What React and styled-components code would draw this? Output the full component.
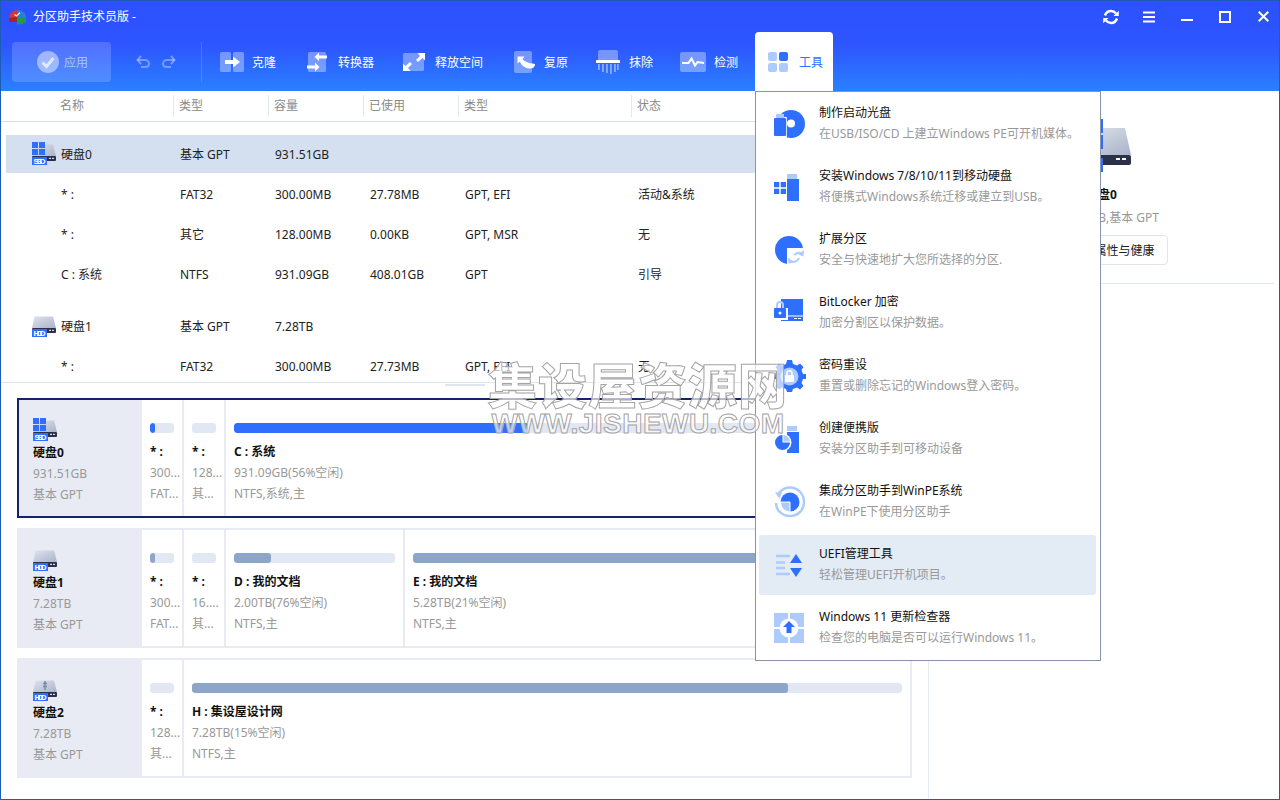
import React from 'react';
import styled, { createGlobalStyle } from 'styled-components';

const FONT = '"Noto Sans", "Noto Sans CJK SC", sans-serif';
const BLUE = '#2f6fff';
const LIGHT = '#aecbff';

const Global = createGlobalStyle`
  html, body { margin: 0; padding: 0; background: #fff; }
  body { font-family: ${FONT}; font-size: 12px; color: #222; overflow: hidden; }
  * { box-sizing: border-box; }
`;

const Window = styled.div`
  position: relative; width: 1280px; height: 800px; border: 1px solid #1c5cb8;
  display: flex; flex-direction: column; overflow: hidden; background: #fff;
`;
const Header = styled.header`
  height: 90px; flex: none; display: flex; flex-direction: column;
  background: linear-gradient(180deg, #2c50ff 0%, #2e56ff 50%, #2a80ff 100%);
`;
const TitleBar = styled.div`
  height: 31px; flex: none; display: flex; align-items: center; padding: 0 0 0 7px; color: #fff;
`;
const TitleText = styled.span`margin-left: 6px; line-height: 30px;`;
const WinControls = styled.div`
  margin-left: auto; display: flex; align-items: center; gap: 14px; padding-right: 4px; height: 31px;
`;
const WinBtn = styled.span`width: 24px; display: flex; justify-content: center;`;
const Toolbar = styled.div`
  height: 59px; flex: none; display: flex; align-items: center; padding-left: 11px;
`;
const ApplyBtn = styled.div`
  width: 99px; height: 40px; border-radius: 4px; background: rgba(255,255,255,.17);
  display: flex; align-items: center; padding-left: 25px; gap: 5px; color: rgba(255,255,255,.55);
`;
const UndoGroup = styled.div`
  display: flex; gap: 12px; margin-left: 25px; width: 65px;
`;
const Sep = styled.div`width: 1px; height: 40px; background: rgba(255,255,255,.16); margin-right: 18px;`;
const Tool = styled.div`
  width: ${p => p.$w}px; display: flex; align-items: center; gap: 8px; color: #fff; flex: none;
`;
const ToolsTab = styled.div`
  align-self: stretch; width: 78px; flex: none; background: #fff; border-radius: 4px 4px 0 0;
  display: flex; align-items: center; gap: 11px; padding-left: 13px; color: ${BLUE};
`;

const Body = styled.main`flex: 1; display: flex; min-height: 0;`;
const LeftPane = styled.section`
  width: 928px; flex: none; border-right: 1px solid #e6eaf2; display: flex; flex-direction: column;
`;
const TableArea = styled.div`
  height: 292px; flex: none; overflow: hidden; border-bottom: 1px solid #dfe5ef;
`;
const TableHead = styled.div`
  height: 31px; border-bottom: 1px solid #d8dfe8; display: grid; align-items: center;
  grid-template-columns: 172px 95px 95px 95px 173px 1fr; color: #8a8a8a;
`;
const HeadCell = styled.div`
  height: 22px; line-height: 22px; padding-left: ${p => p.$first ? 59 : 5}px;
  border-left: ${p => p.$first ? 'none' : '1px solid #e3e7ef'};
`;
const Rows = styled.div`padding: 13px 6px 0 5px;`;
const Row = styled.div`
  display: grid; grid-template-columns: 174px 95px 95px 95px 173px 1fr; align-items: center;
  height: ${p => p.$disk ? 38 : 40}px; background: ${p => p.$sel ? '#d4dfef' : 'transparent'};
  margin-top: ${p => p.$gap ? 13 : 0}px; margin-bottom: ${p => p.$disk ? 1 : 0}px; color: #222;
`;
const NameCell = styled.div`
  display: flex; align-items: center; gap: 5px; padding-left: ${p => p.$disk ? 26 : 55}px;
`;

const Splitter = styled.div`height: 15px; flex: none; display: flex; justify-content: center; padding-top: 1px;`;
const Thumb = styled.div`width: 40px; height: 2px; background: #dfe6f2;`;
const Cards = styled.div`display: flex; flex-direction: column; gap: 10px; padding-left: 16px;`;
const Card = styled.div`
  width: 895px; height: 120px; display: flex; gap: 2px; background: #e8ebf3;
  border: 2px solid ${p => p.$sel ? '#14246a' : '#e8ebf3'};
`;
const DiskPanel = styled.div`
  width: 121px; flex: none; padding: 18px 0 0 14px; background: #e8ebf3;
  display: flex; flex-direction: column;
`;
const DiskName = styled.div`font-weight: 700; color: #111; line-height: 21px;`;
const Gray = styled.div`color: #999; line-height: 21px; white-space: nowrap;`;
const Part = styled.div`
  background: #fff; padding: 23px 8px 0; overflow: hidden; white-space: nowrap;
  ${p => p.$w ? `width: ${p.$w}px; flex: none;` : 'flex: 1; min-width: 0;'}
`;
const Bar = styled.div`
  height: 10px; border-radius: 3px; background: #e2e8f3; overflow: hidden; margin-bottom: 8px;
`;
const Fill = styled.div`
  height: 100%; border-radius: 3px; background: ${p => p.$sel ? BLUE : '#8da5c6'};
`;
const PartName = styled.div`font-weight: 700; color: #111; line-height: 21px;`;

const RightPane = styled.aside`
  flex: 1; padding: 28px 5px 0 0; display: flex; flex-direction: column; align-items: center;
`;
const BigName = styled.div`font-weight: 700; color: #111; line-height: 20px; margin-top: 13px;`;
const BigInfo = styled.div`color: #999; line-height: 20px; margin: 3px 0 0 8px;`;
const PropBtn = styled.div`
  width: 130px; height: 30px; margin: 7px 0 0 2px; border: 1px solid #e0e4ee; border-radius: 4px;
  display: flex; align-items: center; justify-content: flex-end; padding-right: 12px; color: #222;
`;
const Divider = styled.div`align-self: stretch; height: 1px; background: #e3e7f2; margin-top: 18px;`;

const Menu = styled.nav`
  position: absolute; left: 754px; top: 90px; width: 346px; height: 570px; background: #fff;
  border: 1px solid #8793ad; padding: 2px 4px 0 3px; display: flex; flex-direction: column; gap: 3px;
`;
const MenuItem = styled.div`
  height: 60px; flex: none; display: flex; align-items: center; padding-left: 15px; gap: 13px; border-radius: 3px;
  background: ${p => p.$hover ? '#e3ebf5' : 'transparent'};
`;
const IconBox = styled.div`width: 32px; height: 32px; flex: none;`;
const MenuText = styled.div`display: flex; flex-direction: column; margin-top: -1px;`;
const MenuTitle = styled.div`color: #111; line-height: 20px;`;
const MenuDesc = styled.div`color: #999; line-height: 20px; margin-top: 1px; white-space: nowrap;`;

const Mark = styled.div`
  position: absolute; left: 487px; top: 354px; width: 300px; pointer-events: none; text-align: center;
  color: rgba(255,255,255,.68); -webkit-text-stroke: 1px #a4a4a4;
`;
const MarkCn = styled.div`font: 900 49px/55px "Noto Sans CJK SC", sans-serif; letter-spacing: 1px; white-space: nowrap;`;
const MarkEn = styled.div`font: 700 28px/29px "Liberation Sans", sans-serif; letter-spacing: .45px; white-space: nowrap; margin-top: -1px;`;

/* ---------- drawings ---------- */
const Svg = ({ w, h = w, children }) => (
  <svg width={w} height={h} viewBox={`0 0 ${w} ${h}`} style={{ display: 'block', flex: 'none' }}>{children}</svg>
);

const Logo = () => (
  <Svg w={19} h={16}>
    <path d="M1 9C1 4 5 1 9.500 1 10 5 9.500 7 9.500 8.500L1 12Z" fill="#d8323a" />
    <path d="M9.500 1C14 1 18 4 18 8L9.500 8Z" fill="#2a7fd8" />
    <path d="M9 8H18V12C18 14 14 15.500 9 15.500Z" fill="#1f9a55" />
    <path d="M1 9L9 8V12.500L1 13Z" fill="#a32530" />
    <path d="M6.500 5.500L8.500 7 12 3.800" stroke="#d8ffe0" strokeWidth="1.200" fill="none" />
  </Svg>
);
const Check = () => (
  <Svg w={22}>
    <circle cx="11" cy="11" r="11" fill="rgba(255,255,255,.45)" />
    <path d="M5.500 11.500L9.500 15.500 16.500 7" stroke="#dfe8ff" strokeWidth="3" fill="none" />
  </Svg>
);
const Undo = ({ flip }) => (
  <Svg w={14} h={14}>
    <g transform={flip ? 'translate(14 0) scale(-1 1)' : undefined} fill="none" stroke="rgba(255,255,255,.35)" strokeWidth="2">
      <path d="M1.500 5H9C11.500 5 13 7 13 8.500 13 10.500 11.500 12 9 12H5" />
      <path d="M5 1L1.500 5 5 9" />
    </g>
  </Svg>
);
const Clone = () => (
  <Svg w={24} h={20}>
    <rect x="0" y="0" width="11" height="20" rx="1.500" fill="rgba(255,255,255,.35)" />
    <rect x="13" y="0" width="11" height="20" rx="1.500" fill="rgba(255,255,255,.35)" />
    <path d="M5 8H13V4.500L20 10 13 15.500V12H5Z" fill="#fff" />
  </Svg>
);
const Convert = () => (
  <Svg w={23} h={22}>
    <rect x="1" y="1" width="18" height="20" rx="1.500" fill="rgba(255,255,255,.35)" />
    <path d="M20 4.500H12V1.500L7.500 6 12 10V7.500H20Z" fill="#fff" />
    <path d="M0 14.500H8V11.500L12.500 16 8 20.500V17.500H0Z" fill="#fff" />
  </Svg>
);
const Free = () => (
  <Svg w={24} h={20}>
    <rect x="0" y="1" width="21" height="18" rx="1.500" fill="rgba(255,255,255,.35)" />
    <path d="M22 1V8.500L19.500 6 15 10 13 8 17 4 14.500 1Z" fill="#fff" />
    <path d="M0 19V11.500L2.500 14 7 10 9 12 5 16 7.500 19Z" fill="#fff" />
  </Svg>
);
const Restore = () => (
  <Svg w={22} h={22}>
    <rect x="0" y="0" width="18" height="22" rx="2" fill="rgba(255,255,255,.35)" />
    <path d="M3.500 5.500H10.500L8.500 8C10.500 10.500 14 12 21 13 21 16.500 18 18 15 17.500 11 17 7 14.500 6 10.500L3.500 12.500Z" fill="#fff" />
  </Svg>
);
const Wipe = () => (
  <Svg w={25} h={24}>
    <path d="M2 2C2 .9 3 0 4 0H20C21 0 22 .9 22 2V10H2Z" fill="rgba(255,255,255,.35)" />
    <rect x="0" y="10" width="24" height="3" rx=".5" fill="#fff" />
    {[2, 6, 10, 14, 18, 21].map((x, i) => (
      <rect key={x} x={x} y="14" width="1.800" height={[6, 8, 9, 10, 8, 6][i]} fill="rgba(255,255,255,.45)" />
    ))}
  </Svg>
);
const Pulse = () => (
  <Svg w={26} h={20}>
    <rect width="26" height="20" rx="2" fill="rgba(255,255,255,.35)" />
    <path d="M2 11H8.500L11.500 6.500 15 13.500 17.500 10 24 11" fill="none" stroke="#fff" strokeWidth="2" />
  </Svg>
);
const Tiles = () => (
  <Svg w={20}>
    <rect x="0" y="0" width="9" height="9" rx="2" fill={LIGHT} />
    <rect x="11" y="0" width="9" height="9" rx="2" fill={BLUE} />
    <rect x="0" y="11" width="9" height="9" rx="2" fill={LIGHT} />
    <rect x="11" y="11" width="9" height="9" rx="2" fill={LIGHT} />
  </Svg>
);
const Stroke = { fill: 'none', stroke: '#fff', strokeWidth: 2 };
const Refresh = () => (
  <Svg w={16}>
    <path d="M2 6.500C3 3.500 5.500 2 8 2 10.500 2 12 3.200 13 4.500" {...Stroke} strokeWidth="2.400" />
    <path d="M14 9.500C13 12.500 10.500 14 8 14 5.500 14 4 12.800 3 11.500" {...Stroke} strokeWidth="2.400" />
    <path d="M15.800 1.800V7H10.500Z M.2 14.200V9H5.500Z" fill="#fff" />
  </Svg>
);
const Burger = () => (
  <Svg w={12} h={12}>
    <path d="M0 1.500H12M0 6H12M0 10.500H12" {...Stroke} strokeWidth="1.800" />
  </Svg>
);
const Minus = () => <Svg w={12} h={12}><path d="M0 9H12" {...Stroke} /></Svg>;
const Maximize = () => <Svg w={12} h={12}><rect x="1" y="1" width="10" height="10" {...Stroke} /></Svg>;
const Close = () => <Svg w={11} h={11}><path d="M.7 .7L10.300 10.300M10.300 .7L.7 10.300" {...Stroke} /></Svg>;

const WinLogo = ({ x, y, s, fill = BLUE, gap = 1 }) => {
  const c = (s - gap) / 2;
  return (
    <g fill={fill}>
      <rect x={x} y={y} width={c} height={c} />
      <rect x={x + c + gap} y={y} width={c} height={c} />
      <rect x={x} y={y + c + gap} width={c} height={c} />
      <rect x={x + c + gap} y={y + c + gap} width={c} height={c} />
    </g>
  );
};
const DiskIcon = ({ kind = 'HDD', win, usb, id }) => (
  <Svg w={24} h={24}>
    <defs>
      <linearGradient id={id} x1="0" y1="0" x2="1" y2="1">
        <stop offset="0" stopColor="#dfe3ee" />
        <stop offset="1" stopColor="#aab3c8" />
      </linearGradient>
    </defs>
    <path d="M2.500 2.500H21L24 14H0Z" fill={`url(#${id})`} />
    <rect x="0" y="14" width="24" height="5" rx="1" fill="#2a3148" />
    <rect x="17" y="15.800" width="2" height="1" fill="#fff" />
    <rect x="20" y="15.800" width="2" height="1" fill="#fff" />
    {win && <WinLogo x={0} y={0} s={13} />}
    {usb && <path d="M12 3V12M10 5.500H14M10 8.500H14" stroke="#7788a8" strokeWidth="1.400" fill="none" />}
    <rect x="0" y="15" width="15" height="8" fill={BLUE} />
    <text x="1.500" y="22" fontSize="8" fontWeight="700" textLength="12" lengthAdjust="spacing" fill="#fff" fontFamily="Liberation Sans, sans-serif">{kind}</text>
  </Svg>
);
const BigDisk = () => (
  <Svg w={58} h={53}>
    <defs>
      <linearGradient id="bigdisk" x1="0" y1="0" x2="1" y2="1">
        <stop offset="0" stopColor="#e3e7f0" />
        <stop offset="1" stopColor="#a8b2c8" />
      </linearGradient>
    </defs>
    <path d="M6 9H52L58 36H0Z" fill="url(#bigdisk)" />
    <rect x="0" y="36" width="58" height="10" rx="2" fill="#2a3148" />
    <rect x="43" y="39" width="4" height="2" fill="#fff" />
    <rect x="49" y="39" width="4" height="2" fill="#fff" />
    <WinLogo x={0} y={0} s={30} gap={2} />
    <rect x="0" y="39" width="30" height="14" fill={BLUE} />
  </Svg>
);

const MI = ({ children }) => <Svg w={32}>{children}</Svg>;
const icons = [
  <MI key="0">
    <circle cx="17" cy="16" r="14" fill={BLUE} />
    <circle cx="17" cy="15.500" r="4" fill="#fff" />
    <rect x="-1" y="9" width="13.800" height="23" fill="#fff" />
    <rect x="0" y="10" width="12" height="18" rx="1" fill={BLUE} />
    <rect x="2" y="6" width="8" height="4" fill={LIGHT} />
  </MI>,
  <MI key="1">
    <rect x="13" y="3" width="10" height="5" fill={LIGHT} />
    <rect x="13" y="8" width="12" height="22" fill={BLUE} />
    <rect x="-1" y="10" width="14" height="15" fill="#fff" />
    <WinLogo x={0} y={11} s={12} gap={1.500} />
  </MI>,
  <MI key="2">
    <circle cx="15" cy="16" r="14" fill={BLUE} />
    <rect x="13" y="14" width="18" height="18" fill="#fff" />
    <path d="M16 27C20 29 24 27 25 24M19 20" fill="none" stroke={LIGHT} strokeWidth="2" />
    <path d="M14 23.500L14.500 29.500 20 28.500Z" fill={LIGHT} />
    <path d="M20 21C22 19.500 25 18.500 27 19" fill="none" stroke={LIGHT} strokeWidth="2" />
    <path d="M30 16L29.500 22.500 24.500 20.500Z" fill={LIGHT} />
  </MI>,
  <MI key="3">
    <rect x="7" y="2" width="22" height="22" fill={BLUE} />
    <rect x="7" y="18.500" width="22" height="1" fill="#fff" />
    <rect x="20" y="21" width="3" height="1" fill="#fff" />
    <rect x="24" y="21" width="3" height="1" fill="#fff" />
    <rect x="-1" y="11" width="15" height="12" fill="#fff" />
    <rect x="0" y="11" width="12" height="10" rx="1" fill={BLUE} />
    <path d="M3 11V8C3 4 9 4 9 8V11" fill="none" stroke={LIGHT} strokeWidth="2" />
    <circle cx="6" cy="16" r="1.500" fill="#fff" />
  </MI>,
  <MI key="4">
    <path d="M13 0H18L19 4 23 5.500 26 3.500 29.500 7 27.500 10 29 14H32V19H29L27.500 23 29.500 26 26 29.500 23 27.500 19 29 18 32H13L12 29 8 27.500 5 29.500 1.500 26 3.500 23 2 19H0V14H2L3.500 10 1.500 7 5 3.500 8 5.500 12 4Z" fill={BLUE} />
    <circle cx="15.500" cy="16.500" r="9" fill={LIGHT} />
    <rect x="11" y="15" width="9" height="7" rx="1" fill="#fff" />
    <path d="M13 15V13C13 10 18 10 18 13V15" fill="none" stroke="#fff" strokeWidth="1.500" />
  </MI>,
  <MI key="5">
    <rect x="13" y="3" width="10" height="5" fill={LIGHT} />
    <rect x="13" y="9" width="12" height="21" fill={BLUE} />
    <circle cx="8.500" cy="19.500" r="9" fill="#fff" />
    <path d="M8.500 12A7.500 7.500 0 1 0 16 19.500H8.500Z" fill={BLUE} />
    <path d="M9.500 12A7.500 7.500 0 0 1 16 18.500H9.500Z" fill={LIGHT} />
  </MI>,
  <MI key="6">
    <path d="M5 7C9 2 14 1.500 16 1.500 24 1.500 30 8 30 16 30 24 24 30 16 30 8 30 2 24 2 17" fill="none" stroke={LIGHT} strokeWidth="2.500" />
    <path d="M1 6.500L8 6 5.500 13Z" fill={LIGHT} />
    <circle cx="16" cy="16" r="9.500" fill={BLUE} />
    <path d="M16 16V26A9.500 9.500 0 0 1 6.500 16Z" fill={LIGHT} stroke="#fff" />
  </MI>,
  <MI key="7">
    <path d="M2 7H16M2 13.500H11M2 19H11M2 25H16" stroke={LIGHT} strokeWidth="2.700" fill="none" />
    <path d="M16 14L22 5 28 14Z M16 19H28L22 28Z" fill={BLUE} />
  </MI>,
  <MI key="8">
    <rect x="0" y="1" width="30" height="30" fill={LIGHT} />
    <path d="M14 1H16V31H14ZM0 15H30V17H0Z" fill="#fff" />
    <circle cx="15" cy="16" r="9.500" fill="#fff" />
    <path d="M15 9L21 15H17.500V21H12.500V15H9Z" fill={BLUE} />
  </MI>,
];

/* ---------- data ---------- */
const tools = [
  ['克隆', 87, <Clone />], ['转换器', 96, <Convert />], ['释放空间', 111, <Free />],
  ['复原', 82, <Restore />], ['抹除', 84, <Wipe />], ['检测', 75, <Pulse />],
];
const headers = ['名称', '类型', '容量', '已使用', '类型', '状态'];
const rows = [
  { disk: true, sel: true, kind: 'SSD', win: true, cells: ['硬盘0', '基本 GPT', '931.51GB'] },
  { cells: ['* :', 'FAT32', '300.00MB', '27.78MB', 'GPT, EFI', '活动&系统'] },
  { cells: ['* :', '其它', '128.00MB', '0.00KB', 'GPT, MSR', '无'] },
  { cells: ['C : 系统', 'NTFS', '931.09GB', '408.01GB', 'GPT', '引导'] },
  { disk: true, gap: true, kind: 'HDD', cells: ['硬盘1', '基本 GPT', '7.28TB'] },
  { cells: ['* :', 'FAT32', '300.00MB', '27.73MB', 'GPT, EFI', '无'] },
];
const disks = [
  {
    name: '硬盘0', size: '931.51GB', kind: 'SSD', win: true, sel: true,
    parts: [
      { w: 40, n: '* :', s: '300...', f: 'FAT...', p: 22 },
      { w: 40, n: '* :', s: '128...', f: '其...', p: 0 },
      { n: 'C : 系统', s: '931.09GB(56%空闲)', f: 'NTFS,系统,主', p: 44 },
    ],
  },
  {
    name: '硬盘1', size: '7.28TB', kind: 'HDD',
    parts: [
      { w: 40, n: '* :', s: '300...', f: 'FAT...', p: 22 },
      { w: 40, n: '* :', s: '16....', f: '其...', p: 0 },
      { w: 177, n: 'D : 我的文档', s: '2.00TB(76%空闲)', f: 'NTFS,主', p: 23 },
      { n: 'E : 我的文档', s: '5.28TB(21%空闲)', f: 'NTFS,主', p: 79 },
    ],
  },
  {
    name: '硬盘2', size: '7.28TB', kind: 'HDD', usb: true,
    parts: [
      { w: 40, n: '* :', s: '128...', f: '其...', p: 0 },
      { n: 'H : 集设屋设计网', s: '7.28TB(15%空闲)', f: 'NTFS,主', p: 84 },
    ],
  },
];
const menu = [
  ['制作启动光盘', '在USB/ISO/CD 上建立Windows PE可开机媒体。'],
  ['安装Windows 7/8/10/11到移动硬盘', '将便携式Windows系统迁移或建立到USB。'],
  ['扩展分区', '安全与快速地扩大您所选择的分区.'],
  ['BitLocker 加密', '加密分割区以保护数据。'],
  ['密码重设', '重置或删除忘记的Windows登入密码。'],
  ['创建便携版', '安装分区助手到可移动设备'],
  ['集成分区助手到WinPE系统', '在WinPE下使用分区助手'],
  ['UEFI管理工具', '轻松管理UEFI开机项目。'],
  ['Windows 11 更新检查器', '检查您的电脑是否可以运行Windows 11。'],
];

export default function App() {
  return (
    <>
      <Global />
      <Window>
        <Header>
          <TitleBar>
            <Logo />
            <TitleText>分区助手技术员版 -</TitleText>
            <WinControls>
              <WinBtn><Refresh /></WinBtn>
              <WinBtn><Burger /></WinBtn>
              <WinBtn><Minus /></WinBtn>
              <WinBtn><Maximize /></WinBtn>
              <WinBtn><Close /></WinBtn>
            </WinControls>
          </TitleBar>
          <Toolbar>
            <ApplyBtn><Check />应用</ApplyBtn>
            <UndoGroup><Undo /><Undo flip /></UndoGroup>
            <Sep />
            {tools.map(([label, w, icon]) => (
              <Tool key={label} $w={w}>{icon}{label}</Tool>
            ))}
            <ToolsTab><Tiles />工具</ToolsTab>
          </Toolbar>
        </Header>
        <Body>
          <LeftPane>
            <TableArea>
              <TableHead>
                {headers.map((h, i) => <HeadCell key={i} $first={i === 0}>{h}</HeadCell>)}
              </TableHead>
              <Rows>
                {rows.map((r, i) => (
                  <Row key={i} $disk={r.disk} $sel={r.sel} $gap={r.gap}>
                    <NameCell $disk={r.disk}>
                      {r.disk && <DiskIcon kind={r.kind} win={r.win} id={`row${i}`} />}
                      {r.cells[0]}
                    </NameCell>
                    {r.cells.slice(1).map((c, j) => <div key={j}>{c}</div>)}
                  </Row>
                ))}
              </Rows>
            </TableArea>
            <Splitter><Thumb /></Splitter>
            <Cards>
              {disks.map((d, i) => (
                <Card key={d.name} $sel={d.sel}>
                  <DiskPanel>
                    <DiskIcon kind={d.kind} win={d.win} usb={d.usb} id={`card${i}`} />
                    <DiskName>{d.name}</DiskName>
                    <Gray>{d.size}</Gray>
                    <Gray>基本 GPT</Gray>
                  </DiskPanel>
                  {d.parts.map((p, j) => (
                    <Part key={j} $w={p.w}>
                      <Bar><Fill $sel={d.sel} style={{ width: `${p.p}%` }} /></Bar>
                      <PartName>{p.n}</PartName>
                      <Gray>{p.s}</Gray>
                      <Gray>{p.f}</Gray>
                    </Part>
                  ))}
                </Card>
              ))}
            </Cards>
          </LeftPane>
          <RightPane>
            <BigDisk />
            <BigName>硬盘0</BigName>
            <BigInfo>931.51GB,基本 GPT</BigInfo>
            <PropBtn>属性与健康</PropBtn>
            <Divider />
          </RightPane>
        </Body>
        <Menu>
          {menu.map(([t, d], i) => (
            <MenuItem key={t} $hover={i === 7}>
              <IconBox>{icons[i]}</IconBox>
              <MenuText>
                <MenuTitle>{t}</MenuTitle>
                <MenuDesc>{d}</MenuDesc>
              </MenuText>
            </MenuItem>
          ))}
        </Menu>
        <Mark>
          <MarkCn>集设屋资源网</MarkCn>
          <MarkEn>WWW.JISHEWU.COM</MarkEn>
        </Mark>
      </Window>
    </>
  );
}
